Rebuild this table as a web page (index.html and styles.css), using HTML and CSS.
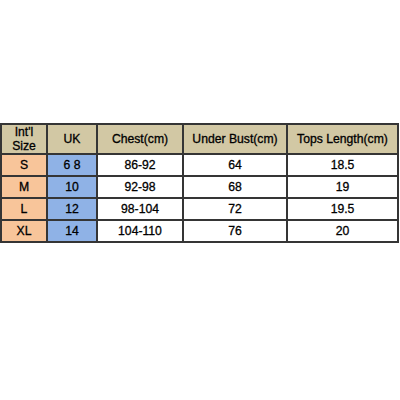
FILE: index.html
```html
<!DOCTYPE html>
<html>
<head>
<meta charset="utf-8">
<link rel="stylesheet" href="styles.css">
</head>
<body>
<div class="page">
<table class="size-table">
  <colgroup>
    <col class="c1"><col class="c2"><col class="c3"><col class="c4"><col class="c5">
  </colgroup>
  <tr class="head">
    <td>Int'l<br>Size</td><td>UK</td><td>Chest(cm)</td><td>Under Bust(cm)</td><td>Tops Length(cm)</td>
  </tr>
  <tr><td class="size">S</td><td class="uk">6 8</td><td>86-92</td><td>64</td><td>18.5</td></tr>
  <tr><td class="size">M</td><td class="uk">10</td><td>92-98</td><td>68</td><td>19</td></tr>
  <tr><td class="size">L</td><td class="uk">12</td><td>98-104</td><td>72</td><td>19.5</td></tr>
  <tr><td class="size">XL</td><td class="uk">14</td><td>104-110</td><td>76</td><td>20</td></tr>
</table>
</div>
</body>
</html>
```
FILE: styles.css
```css
html, body { margin: 0; padding: 0; background: #fff; }
.page { padding-top: 123px; padding-left: 0; }
.size-table {
  border-collapse: collapse;
  table-layout: fixed;
  width: 397px;
  font-family: "Liberation Sans", Arial, sans-serif;
  font-size: 12.2px;
  color: #000;
  -webkit-text-stroke: 0.3px #000;
}
.c1 { width: 46px; } .c2 { width: 50px; } .c3 { width: 86px; } .c4 { width: 104px; } .c5 { width: 111px; }
.size-table td {
  border: 2px solid #353535;
  text-align: center;
  padding: 0;
  height: 20px;
  line-height: 14px;
}
.size-table tr.head td { background: #d2c8a4; height: 28px; line-height: 14px; }
.size-table td.size { background: #f8c59a; }
.size-table td.uk { background: #8fb2e6; }
```
